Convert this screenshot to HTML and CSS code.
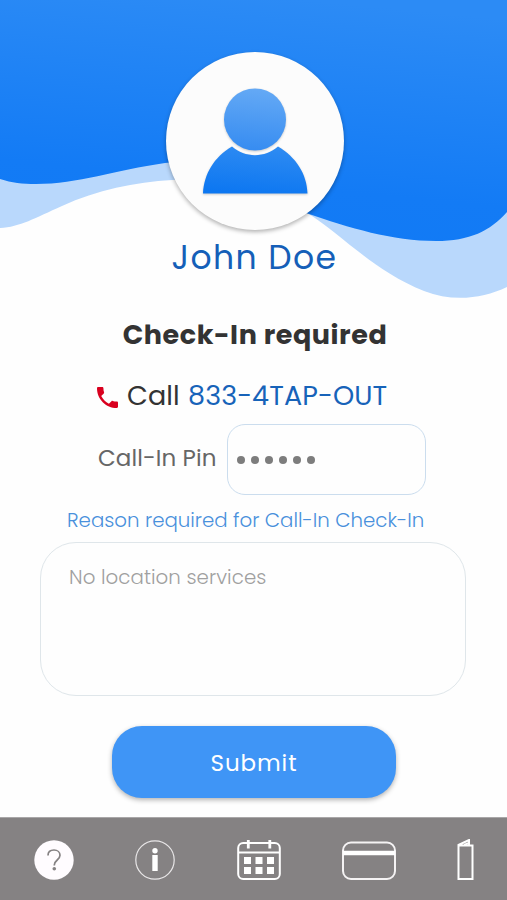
FILE: index.html
```html
<!DOCTYPE html>
<html lang="en">
  <head>
    <meta charset="UTF-8" />
    <meta name="viewport" content="width=device-width, initial-scale=1.0" />
    <title>Check-In</title>
    <link rel="stylesheet" href="styles.css">
  </head>
  <body>
    <div class="screen">
      <header class="header">
        <svg class="waves" viewBox="0 0 507 310" aria-hidden="true">
          <defs>
            <linearGradient id="sky" x1="0.6" y1="0" x2="0.4" y2="1">
              <stop offset="0" stop-color="#2c8bf5" />
              <stop offset="0.75" stop-color="#137bf5" />
              <stop offset="1" stop-color="#117af5" />
            </linearGradient>
          </defs>
          <path fill="#b9d8fc" d="M0 0H507V287C482 299 452 302 424 291C374 271 342 235 309 214C260 183 215 178 172 180C135 182 97 190 62 206C35 218 20 227 0 228Z" />
          <path fill="url(#sky)" d="M0 0H507V212C490 231 470 241 436 241C392 241 350 228 306 213C256 180 215 157 165 163C115 170 78 184 36 184C22 184 12 183 0 179Z" />
        </svg>
        <div class="avatar">
          <svg viewBox="0 0 178 178" aria-hidden="true">
            <defs>
              <linearGradient id="head" x1="0.5" y1="0" x2="0.4" y2="1">
                <stop offset="0" stop-color="#64a9f5" />
                <stop offset="1" stop-color="#368cf1" />
              </linearGradient>
              <linearGradient id="body" x1="0.6" y1="0" x2="0.4" y2="1">
                <stop offset="0" stop-color="#2e8bf2" />
                <stop offset="1" stop-color="#0d77f1" />
              </linearGradient>
            </defs>
            <circle class="figure" fill="url(#head)" cx="89" cy="67.500" r="31" />
            <path class="figure" fill="url(#body)" d="M66 94.500C79 106 99 106 112 94.500C130 105 141 122 141.500 141.500H37C38 122 48 105 66 94.500Z" />
          </svg>
        </div>
        <h1 class="name">John Doe</h1>
      </header>

      <main class="content">
        <h2 class="title">Check-In required</h2>
        <div class="call">
          <svg class="phone" viewBox="3 3 18 18" aria-hidden="true">
            <path fill="#d9001f" d="M20 15.500c-1.250 0-2.450-.2-3.570-.57-.35-.11-.74-.03-1.020.24l-2.200 2.200c-2.830-1.440-5.150-3.750-6.590-6.590l2.200-2.210c.28-.26.360-.65.250-1C8.700 6.450 8.500 5.250 8.500 4c0-.55-.45-1-1-1H4c-.55 0-1 .45-1 1 0 9.390 7.610 17 17 17 .55 0 1-.45 1-1v-3.500c0-.55-.45-1-1-1z" />
          </svg>
          <span class="call-label">Call</span>
          <a class="number">833-4TAP-OUT</a>
        </div>
        <div class="pin">
          <span class="pin-label">Call-In Pin</span>
          <div class="pin-field">
            <i class="dot"></i><i class="dot"></i><i class="dot"></i><i class="dot"></i><i class="dot"></i><i class="dot"></i>
          </div>
        </div>
        <div class="reason-label"><span>Reason required for Call-In Check-In</span></div>
        <div class="reason"><span>No location services</span></div>
        <button class="submit"><span>Submit</span></button>
      </main>

      <nav class="tabs">
        <svg width="40" height="40" viewBox="0 0 40 40">
          <circle cx="20" cy="20" r="19.700" fill="#fffcff" />
          <path d="M14 15.500C14 12 16.500 10 20 10S26 12.300 26 15.300C26 20 20.300 20 20.300 25V25.500" fill="none" stroke="#858283" stroke-width="1.700" />
          <circle cx="20.300" cy="28.800" r="1.800" fill="#858283" />
        </svg>
        <svg width="40" height="40" viewBox="0 0 40 40">
          <circle cx="20" cy="20" r="19.200" fill="none" stroke="#e9e7e8" stroke-width="1.200" />
          <circle cx="20" cy="10.700" r="2.700" fill="#fff" />
          <path d="M17.300 15H22.700V31H17.300Z" fill="#fff" />
        </svg>
        <svg width="44" height="40" viewBox="0 0 44 40">
          <g fill="none" stroke="#fff" stroke-width="2">
            <rect x="1.200" y="3" width="41.600" height="36" rx="5" />
            <path d="M1 12.600H43" />
            <path d="M11.300 0V8.500M32.800 0V8.500" stroke-width="2.800" />
          </g>
          <path fill="#fff" d="M7 17h7v7H7zM18.500 17h7v7h-7zM30 17h7v7h-7zM7 27h7v7H7zM18.500 27h7v7h-7zM30 27h7v7h-7z" />
        </svg>
        <svg width="54" height="40" viewBox="0 0 54 40">
          <rect x="1" y="2.500" width="52" height="36.500" rx="8" fill="none" stroke="#f5f3f4" stroke-width="2" />
          <path d="M1 13H53" stroke="#fff" stroke-width="4.400" />
        </svg>
        <svg width="17" height="42" viewBox="0 0 17 42">
          <g fill="none" stroke="#fff" stroke-width="2">
            <path d="M1.500 6.500H15.500V40H1.500V6L12 1V6" />
            <path d="M7 6L12 4" />
          </g>
        </svg>
      </nav>
    </div>
  </body>
</html>
```
FILE: styles.css
```css
* {
  box-sizing: border-box;
}

body {
  margin: 0;
  background: #fefefe;
  font-family: Poppins, Inter, sans-serif;
}

.screen {
  display: flex;
  flex-direction: column;
  width: 507px;
  height: 900px;
  overflow: hidden;
}

/* Blue waves sit behind the avatar and the name */
.header {
  position: relative;
  height: 310px;
  padding-top: 52px;
  display: flex;
  flex-direction: column;
  align-items: center;
}

.waves {
  position: absolute;
  top: 0;
  left: 0;
  width: 507px;
  height: 310px;
}

.avatar {
  position: relative;
  width: 178px;
  height: 178px;
  margin-left: 3px;
  border-radius: 50%;
  background: #fcfcfc;
  box-shadow: 0 2px 4px rgba(0, 0, 0, 0.3);
}

.avatar svg {
  display: block;
}

.figure {
  filter: drop-shadow(0 1px 1px rgba(0, 0, 0, 0.2));
}

.name {
  position: relative;
  margin: 8px 0 0 2px;
  color: #155fb8;
  font-size: 33px;
  font-weight: 400;
  line-height: 40px;
  letter-spacing: 1.4px;
}

.content {
  flex: 1;
  display: flex;
  flex-direction: column;
  align-items: center;
  padding-top: 5px;
}

.title {
  margin: 0 0 0 3px;
  color: #333;
  font-size: 27px;
  font-weight: 700;
  line-height: 40px;
  letter-spacing: 0.55px;
}

.call {
  display: flex;
  align-items: center;
  align-self: flex-start;
  height: 40px;
  margin: 21px 0 0 97px;
  font-size: 27px;
  font-weight: 400;
  letter-spacing: 0.1px;
}

.phone {
  width: 21px;
  height: 21px;
  margin-top: 2px;
}

.call-label {
  width: 53px;
  margin: 0 8px 0 9px;
  color: #333;
}

.number {
  color: #1763b9;
}

.pin {
  display: flex;
  align-items: center;
  align-self: flex-start;
  margin: 8px 0 0 98px;
}

.pin-label {
  width: 129px;
  padding-bottom: 3px;
  color: #666;
  font-size: 23px;
  font-weight: 400;
  letter-spacing: 0.1px;
}

.pin-field {
  display: flex;
  align-items: center;
  gap: 6px;
  width: 199px;
  height: 71px;
  padding-left: 9px;
  border: 1.5px solid #cbddee;
  border-radius: 18px;
}

.dot {
  width: 8px;
  height: 8px;
  border-radius: 50%;
  background: #7d7d7d;
}

.reason-label {
  width: 373px;
  height: 47px;
  color: #4990dc;
  font-size: 19.8px;
  font-weight: 300;
  line-height: 51px;
  white-space: nowrap;
}

.reason {
  width: 426px;
  height: 154px;
  padding: 19px 28px;
  margin-right: 1px;
  border: 1px solid #dfe6ea;
  border-radius: 36px;
  color: #a0a0a0;
  font-size: 19.8px;
  font-weight: 300;
  letter-spacing: 0.07px;
}

.submit {
  width: 284px;
  height: 72px;
  margin: 30px 0 0 1px;
  padding-top: 3px;
  border: 0;
  border-radius: 30px;
  background: #3f95f6;
  box-shadow: 0 2px 5px rgba(0, 0, 0, 0.3);
  color: #fff;
  font-family: inherit;
  font-size: 23px;
  letter-spacing: 0.9px;
}

.tabs {
  display: flex;
  align-items: center;
  justify-content: space-between;
  height: 83px;
  padding: 1px 33px 0 34px;
  border-top: 1px solid #a9a7a8;
  background: #858283;
}
```
